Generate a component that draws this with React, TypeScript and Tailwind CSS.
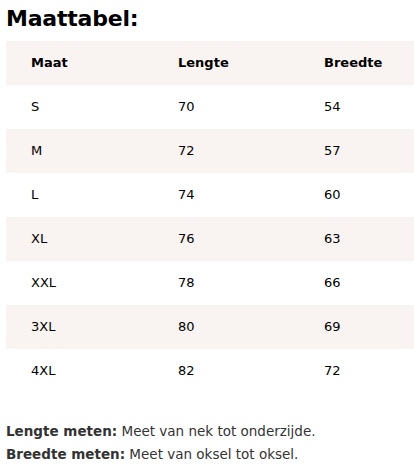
const rows = [
  ['S', '70', '54'],
  ['M', '72', '57'],
  ['L', '74', '60'],
  ['XL', '76', '63'],
  ['XXL', '78', '66'],
  ['3XL', '80', '69'],
  ['4XL', '82', '72'],
]

const App = () => {
  return (
    <div className="min-h-screen bg-white px-[6px] pt-[4px] text-black" style={{ fontFamily: '"DejaVu Sans", sans-serif' }}>
      <h2 className="text-[22px] font-bold leading-[30px] tracking-[-0.2px]">Maattabel:</h2>

      <table className="mt-[7px] w-[408px] table-fixed border-collapse text-[13px]">
        <colgroup>
          <col className="w-[172px]" />
          <col className="w-[146px]" />
          <col />
        </colgroup>
        <thead>
          <tr className="h-[44px] bg-[#f9f4f1] font-bold text-left">
            <th className="pl-[25px]">Maat</th>
            <th>Lengte</th>
            <th>Breedte</th>
          </tr>
        </thead>
        <tbody>
          {rows.map((r, i) => (
            <tr key={r[0]} className={i % 2 === 1 ? 'h-[44px] bg-[#f9f4f1]' : 'h-[44px]'}>
              <td className="pl-[25px]">{r[0]}</td>
              <td>{r[1]}</td>
              <td>{r[2]}</td>
            </tr>
          ))}
        </tbody>
      </table>

      <div className="mt-[27px] text-[13.5px] leading-[23px] text-[#333]">
        <p><b>Lengte meten:</b> Meet van nek tot onderzijde.</p>
        <p><b>Breedte meten:</b> Meet van oksel tot oksel.</p>
      </div>
    </div>
  )
}

export default App
